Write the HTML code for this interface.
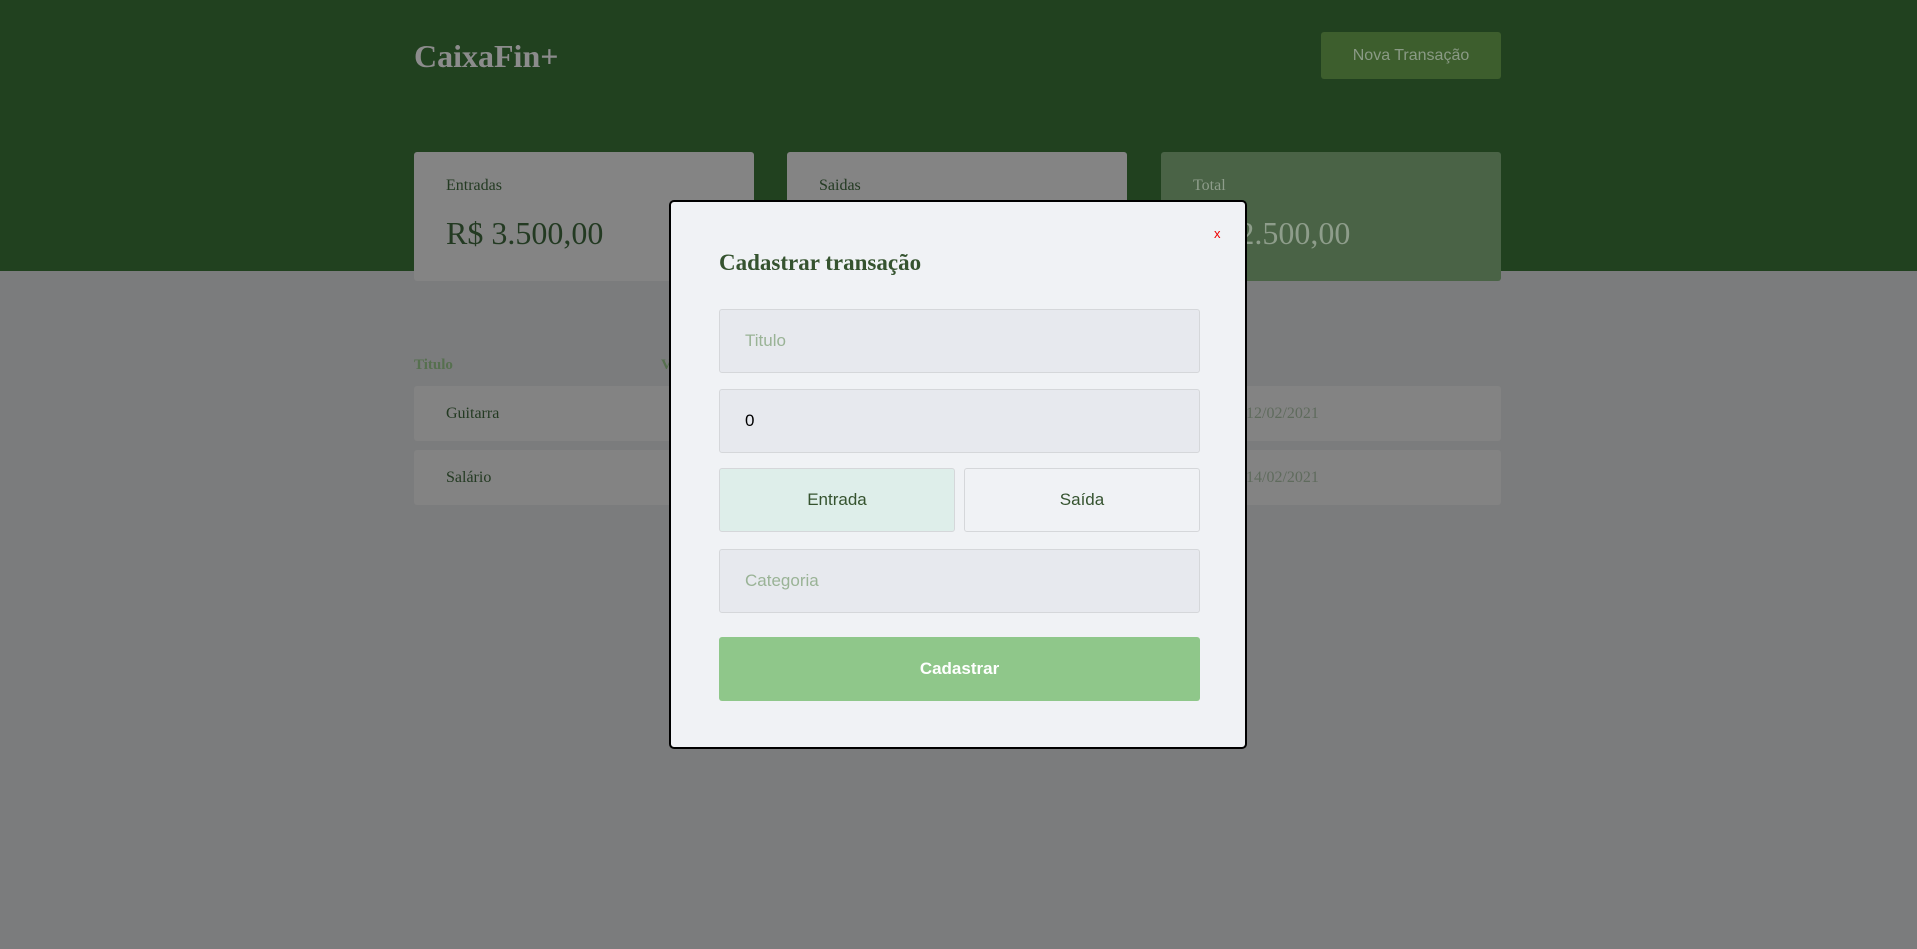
<!DOCTYPE html>
<html><head><meta charset="utf-8"><style>
*{margin:0;padding:0;box-sizing:border-box}
body{width:1917px;height:949px;background:#7b7c7d;position:relative;overflow:hidden;font-family:"Liberation Serif",serif}
.hdr{position:absolute;left:0;top:0;width:1917px;height:271px;background:#21411f}
.abs{position:absolute}
.logo{left:414px;top:38px;font-size:32px;font-weight:bold;color:#8c8c8c}
.nbtn{left:1321px;top:32px;width:180px;height:47px;background:#3d5e2d;border-radius:3px;color:#8a9a85;font:16px "Liberation Sans",sans-serif;display:flex;align-items:center;justify-content:center}
.card{top:152px;width:340px;height:129px;background:#848484;border-radius:3px}
.card .l{position:absolute;left:32px;top:25px;font-size:16px;color:#233a22}
.card .v{position:absolute;left:32px;top:63px;font-size:32px;color:#233a22}
.th{top:357px;font-size:15px;font-weight:bold;color:#56704f}
.row{left:414px;width:1087px;height:55px;background:#838383;border-radius:3px}
.row .t{position:absolute;left:32px;top:19px;font-size:16px;color:#233a22}
.row .d{position:absolute;left:832px;top:19px;font-size:16px;color:#5f6b5d}
.modal{left:669px;top:200px;width:578px;height:549px;background:#f0f2f5;border:2px solid #000;border-radius:5px}
.mt{left:48px;top:48px;font-size:23px;font-weight:bold;color:#35532f}
.x{left:543px;top:24px;font:13px "Liberation Sans",sans-serif;color:#e00}
.inp{left:48px;width:481px;height:64px;background:#e7e9ee;border:1px solid #d5d7da;border-radius:3px;font:17px "Liberation Sans",sans-serif;color:#9ab396;padding-left:25px;display:flex;align-items:center}
.tb{top:266px;width:236px;height:64px;border:1px solid #d5d7da;border-radius:3px;font:17px "Liberation Sans",sans-serif;color:#35532f;display:flex;align-items:center;justify-content:center}
.sub{left:48px;top:435px;width:481px;height:64px;background:#8fc78a;border-radius:3px;color:#fff;font:bold 17px "Liberation Sans",sans-serif;display:flex;align-items:center;justify-content:center}
</style></head><body>
<div class="hdr"></div>
<div class="abs logo">CaixaFin+</div>
<div class="abs nbtn">Nova Transação</div>
<div class="abs card" style="left:414px"><div class="l">Entradas</div><div class="v">R$ 3.500,00</div></div>
<div class="abs card" style="left:787px"><div class="l">Saidas</div><div class="v">-R$ 1.000,00</div></div>
<div class="abs card" style="left:1161px;background:#4a6346"><div class="l" style="color:#8e9d8b">Total</div><div class="v" style="color:#8e9d8b">R$ 2.500,00</div></div>
<div class="abs th" style="left:414px">Titulo</div>
<div class="abs th" style="left:661px">Valor</div>
<div class="abs row" style="top:386px"><div class="t">Guitarra</div><div class="d">12/02/2021</div></div>
<div class="abs row" style="top:450px"><div class="t">Salário</div><div class="d">14/02/2021</div></div>
<div class="abs modal">
<div class="abs x">x</div>
<div class="abs mt">Cadastrar transação</div>
<div class="abs inp" style="top:107px">Titulo</div>
<div class="abs inp" style="top:187px;color:#000">0</div>
<div class="abs tb" style="left:48px;background:#deeeea">Entrada</div>
<div class="abs tb" style="left:293px;background:#f0f2f5">Saída</div>
<div class="abs inp" style="top:347px">Categoria</div>
<div class="abs sub">Cadastrar</div>
</div>
</body></html>
